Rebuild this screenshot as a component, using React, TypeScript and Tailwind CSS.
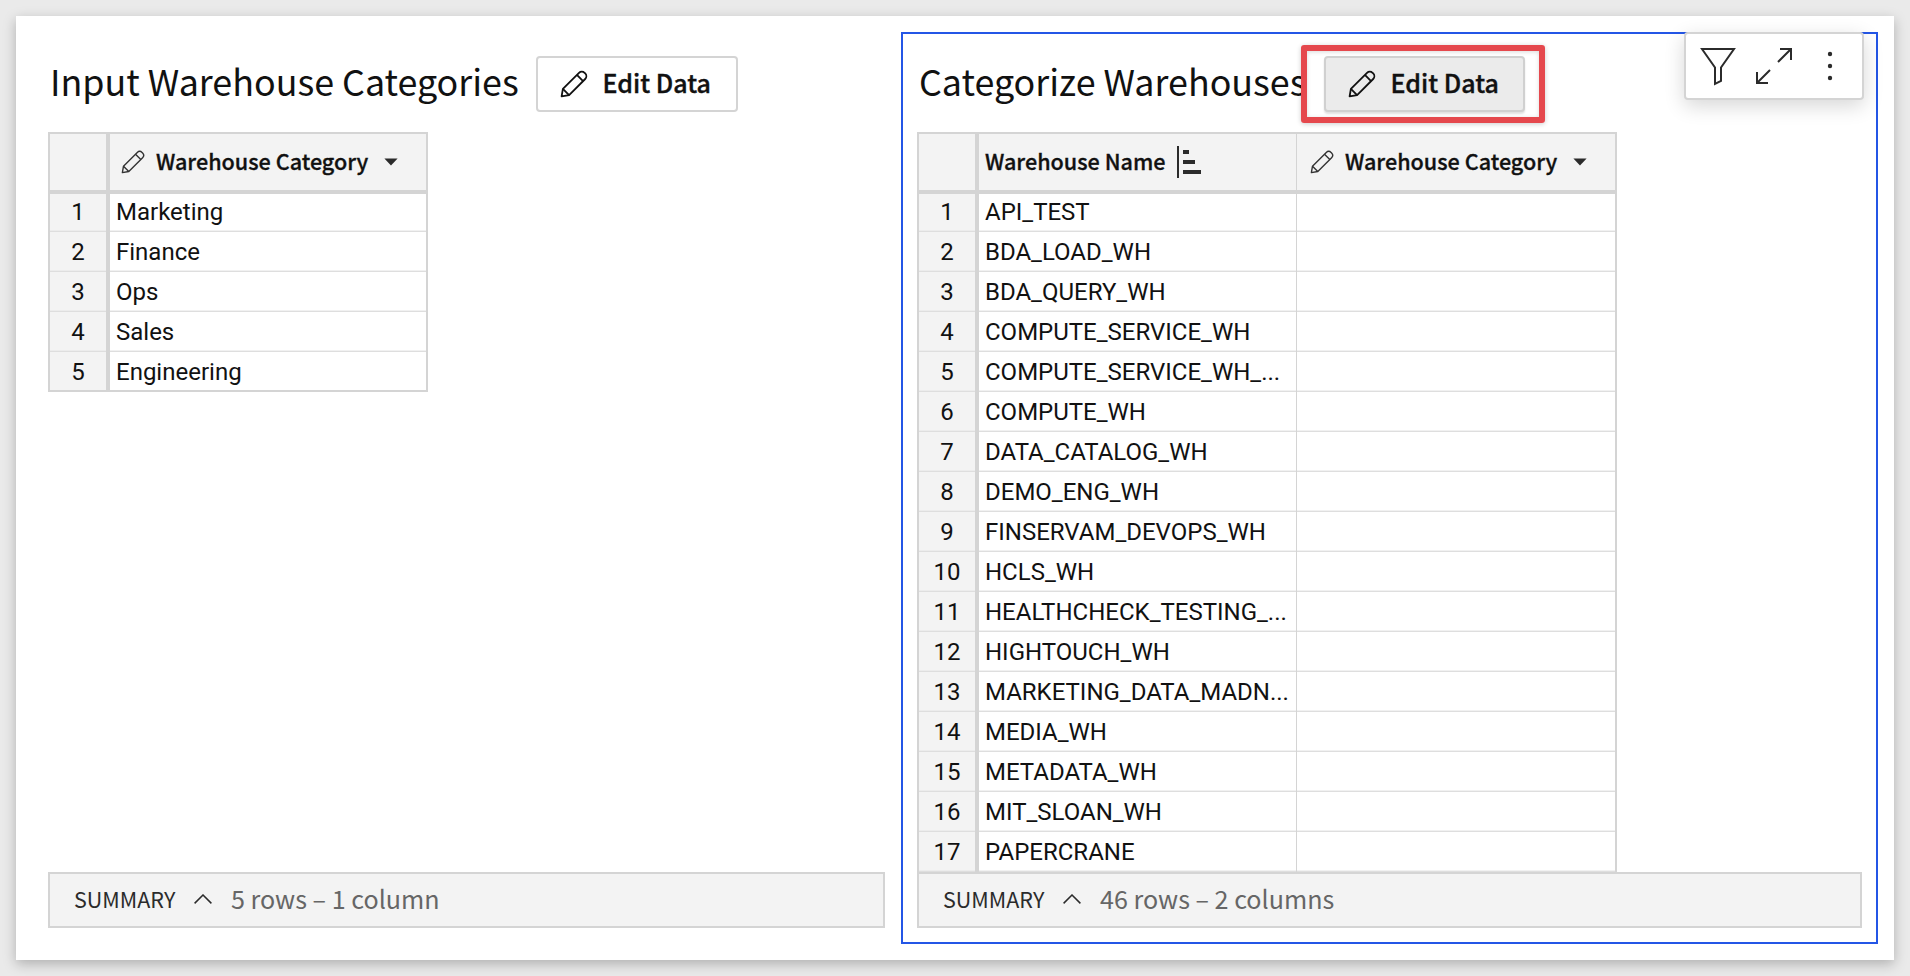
import React from "react";

const leftRows = ["Marketing", "Finance", "Ops", "Sales", "Engineering"];

const rightRows = [
  "API_TEST",
  "BDA_LOAD_WH",
  "BDA_QUERY_WH",
  "COMPUTE_SERVICE_WH",
  "COMPUTE_SERVICE_WH_...",
  "COMPUTE_WH",
  "DATA_CATALOG_WH",
  "DEMO_ENG_WH",
  "FINSERVAM_DEVOPS_WH",
  "HCLS_WH",
  "HEALTHCHECK_TESTING_...",
  "HIGHTOUCH_WH",
  "MARKETING_DATA_MADN...",
  "MEDIA_WH",
  "METADATA_WH",
  "MIT_SLOAN_WH",
  "PAPERCRANE",
];

function Pencil({ className, stroke }: { className: string; stroke: number }) {
  return (
    <svg viewBox="0 0 28 28" className={className} fill="none" stroke="currentColor" strokeWidth={stroke} strokeLinejoin="round">
      <path d="M1.6 26.4 2.9 18.900 19 2.800a4 4 0 0 1 5.600 0l.6.6a4 4 0 0 1 0 5.600L9.100 25.100Z" />
      <path d="M2.900 18.900 9.100 25.100M16.900 4.900l6.200 6.200" />
    </svg>
  );
}

function EditButton({ hovered = false }: { hovered?: boolean }) {
  return (
    <button
      className={
        hovered
          ? "relative flex h-14 w-[201px] items-center rounded-[4px] border-2 border-[#d0d0d0] bg-[#ebebeb] pl-[22px] shadow-[0_2px_2px_rgba(0,0,0,0.12)]"
          : "flex h-14 w-[202px] items-center rounded-[4px] border-2 border-[#d4d4d4] bg-white pl-[22px]"
      }
    >
      <Pencil className="h-7 w-7 shrink-0" stroke={1.8} />
      <span className="ml-[14.5px] pb-[2.6px] text-[25px] leading-none font-medium whitespace-nowrap [-webkit-text-stroke:0.35px_#111]">Edit Data</span>
    </button>
  );
}

function Caret() {
  return (
    <svg viewBox="0 0 14 8" className="h-[8px] w-[14px]">
      <path d="M0.4 0.6h13.2L7 7.4Z" fill="#2b2b2b" />
    </svg>
  );
}

function CategoryHeading() {
  return (
    <>
      <Pencil className="h-6 w-6 shrink-0 text-[#333]" stroke={1.6} />
      <span className="ml-[11px] w-[212px] pb-[2.6px] text-[21.6px] leading-none font-medium whitespace-nowrap [-webkit-text-stroke:0.3px_#111]">Warehouse Category</span>
      <span className="ml-[16px]">
        <Caret />
      </span>
    </>
  );
}

function RowNumber({ n }: { n: number }) {
  return (
    <div className="flex h-10 w-[60px] shrink-0 items-center justify-center border-r-4 border-[#d4d4d4] bg-[#f3f3f3]">
      <div className="flex h-full w-full items-center justify-center border-b border-[#dedede] pt-[1.2px] text-[24px] shadow-[inset_0_-1px_0_#ececec]">{n}</div>
    </div>
  );
}

function Summary({ text }: { text: string }) {
  return (
    <footer className="flex h-14 items-center border-2 border-[#d4d4d4] bg-[#f3f3f3] pl-6">
      <span className="w-[102px] pb-[2.6px] text-[21.5px] leading-none text-[#2b2b2b]">SUMMARY</span>
      <svg viewBox="0 0 18 10" className="mb-[2px] ml-[18px] h-[10px] w-[18px]" fill="none" stroke="#2b2b2b" strokeWidth="1.5">
        <path d="M.6 9.4 9 1l8.400 8.400" />
      </svg>
      <span className="ml-[19px] pb-[3.6px] text-[25.1px] leading-none whitespace-nowrap text-[#666]">{text}</span>
    </footer>
  );
}

export default function App() {
  return (
    <div className="h-[976px] w-[1910px] overflow-hidden bg-[#eaeaea] p-4 font-['Noto_Sans_CJK_SC',sans-serif] text-[#111]">
      <main className="flex h-[944px] w-[1878px] bg-white pt-4 shadow-[0_4px_12px_rgba(0,0,0,0.25)]">
        <section className="flex h-[912px] w-[869px] shrink-0 flex-col pt-6 pl-8">
          <header className="flex h-14 items-center">
            <h1 className="w-[488px] pb-[6.4px] pl-0.5 text-[35.85px] leading-none whitespace-nowrap">Input Warehouse Categories</h1>
            <EditButton />
          </header>
          <div className="mt-5 flex h-[740px] flex-col items-start">
            <div className="w-[380px] border-2 border-[#d4d4d4]">
              <div className="relative flex h-[60px] border-b-4 border-[#d4d4d4] bg-[#f3f3f3]">
                <div className="w-[60px] border-r-4 border-[#d4d4d4]" />
                <div className="flex items-center pl-[11px]">
                  <CategoryHeading />
                </div>
              </div>
              <div className="-mt-[2px] h-[198px] overflow-hidden font-[Roboto,sans-serif]">
                {leftRows.map((name, i) => (
                  <div key={name} className="flex">
                    <RowNumber n={i + 1} />
                    <div className="flex h-10 flex-1 items-center border-b border-[#dedede] pt-[1.2px] pl-[6px] text-[24px] shadow-[inset_0_-1px_0_#f1f1f1]">{name}</div>
                  </div>
                ))}
              </div>
            </div>
          </div>
          <div className="w-[837px]">
            <Summary text="5 rows – 1 column" />
          </div>
        </section>
        <section className="relative ml-4 flex h-[912px] w-[977px] shrink-0 flex-col border-2 border-[#2456e6] pt-[22px] pl-[14px]">
          <header className="flex h-14 items-center">
            <h1 className="w-[407px] pb-[6.4px] pl-0.5 text-[35.85px] leading-none whitespace-nowrap">Categorize Warehouses</h1>
            <EditButton hovered />
          </header>
          <div className="mt-5 flex h-[740px] w-[700px] flex-col border-2 border-b-0 border-[#d4d4d4]">
            <div className="relative flex h-[60px] shrink-0 border-b-4 border-[#d4d4d4] bg-[#f3f3f3]">
              <div className="w-[60px] border-r-4 border-[#d4d4d4]" />
              <div className="flex w-[318px] items-center border-r border-[#d4d4d4] pl-[6px]">
                <span className="w-[180px] pb-[2.6px] text-[21.6px] leading-none font-medium whitespace-nowrap [-webkit-text-stroke:0.3px_#111]">Warehouse Name</span>
                <svg viewBox="0 0 24 32" className="ml-[12px] h-8 w-6" fill="#2b2b2b" shapeRendering="crispEdges">
                  <path d="M0 0h2v32H0zM6 4h6v4H6zM6 14h12v4H6zM6 24h18v4H6z" />
                </svg>
              </div>
              <div className="flex items-center pl-[13px]">
                <CategoryHeading />
              </div>
            </div>
            <div className="-mt-[2px] font-[Roboto,sans-serif]">
              {rightRows.map((name, i) => (
                <div key={name} className="flex">
                  <RowNumber n={i + 1} />
                  <div className="flex h-10 w-[318px] items-center border-r border-[#d4d4d4]">
                    <div className="flex h-full w-full items-center border-b border-[#dedede] pt-[1.2px] pl-[6px] text-[24px] whitespace-nowrap shadow-[inset_0_-1px_0_#f1f1f1]">{name}</div>
                  </div>
                  <div className="h-10 flex-1 border-b border-[#dedede] shadow-[inset_0_-1px_0_#f1f1f1]" />
                </div>
              ))}
            </div>
          </div>
          <div className="w-[945px]">
            <Summary text="46 rows – 2 columns" />
          </div>
          <div className="absolute top-[11px] left-[398px] h-[78px] w-[244px] rounded-[3px] border-6 border-[#e5484d] shadow-[0_1px_5px_rgba(0,0,0,0.2),inset_0_1px_4px_rgba(0,0,0,0.15)]" />
          <div className="absolute -top-[2px] left-[781px] flex h-[68px] w-[180px] items-center rounded-[4px] border-2 border-[#d4d4d4] bg-white shadow-[0_6px_20px_rgba(0,0,0,0.16)]">
            <svg viewBox="0 0 180 68" className="-ml-[2px] h-[68px] w-[180px] shrink-0" fill="none" stroke="#2b2b2b" strokeWidth="2">
              <path d="M18 17H50L37 35.500V49L31 52V35.500Z" />
              <path d="M96 17h11v11M107 17 94 30M73 40v11h11M73 51 86 38" />
              <g fill="#2b2b2b" stroke="none">
                <circle cx="146" cy="22" r="2.200" />
                <circle cx="146" cy="34" r="2.200" />
                <circle cx="146" cy="46" r="2.200" />
              </g>
            </svg>
          </div>
        </section>
      </main>
    </div>
  );
}
